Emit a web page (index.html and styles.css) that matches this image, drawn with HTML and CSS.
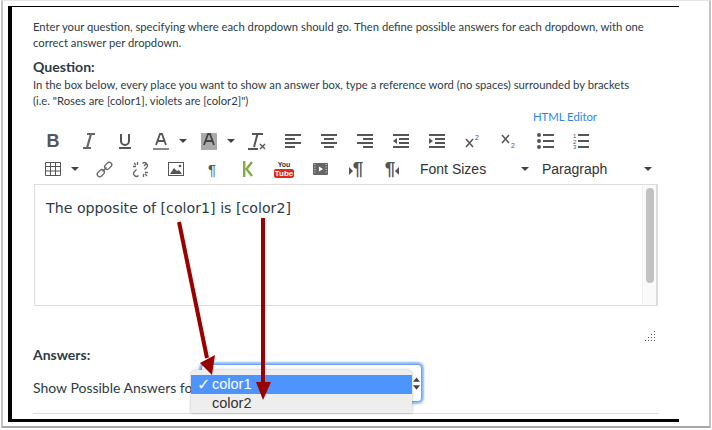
FILE: index.html
```html
<!DOCTYPE html>
<html lang="en">
<head>
<meta charset="utf-8">
<title>Question editor</title>
<link rel="stylesheet" href="styles.css">
</head>
<body>
<div class="window">
  <div class="frame">
    <div class="content">
      <p class="intro">Enter your question, specifying where each dropdown should go. Then define possible answers for each dropdown, with one<br>correct answer per dropdown.</p>
      <h2 class="heading-q">Question:</h2>
      <p class="help">In the box below, every place you want to show an answer box, type a reference word (no spaces) surrounded by brackets<br>(i.e. "Roses are [color1], violets are [color2]")</p>
      <div class="html-link"><a>HTML Editor</a></div>

      <div class="toolbar">
        <span class="btn"><span class="t-b">B</span></span>
        <span class="btn"><svg width="16" height="16" viewBox="0 0 16 16"><path d="M6 1h8M10 1L6 15M2 15h8" fill="none" stroke="#666" stroke-width="2.200"/></svg></span>
        <span class="btn"><svg width="14" height="16" viewBox="0 0 14 16"><path d="M3 1v7a4 4 0 0 0 8 0V1" fill="none" stroke="#555" stroke-width="2"/><rect x="1" y="14" width="12" height="2" fill="#555"/></svg></span>
        <span class="btn split"><span class="ic"><svg width="16" height="17" viewBox="0 0 16 17"><path d="M3 12L7 1h2l4 11M4.500 8h7" fill="none" stroke="#555" stroke-width="1.800"/><rect y="15" width="16" height="2" fill="#888"/></svg></span><span class="caret"></span></span>
        <span class="btn split"><span class="ic"><svg width="16" height="17" viewBox="0 0 16 17"><rect width="16" height="17" fill="#aaa"/><path d="M3 12L7 1h2l4 11M4.500 8h7" fill="none" stroke="#444" stroke-width="1.800"/></svg></span><span class="caret"></span></span>
        <span class="btn"><svg width="18" height="17" viewBox="0 0 18 17"><path d="M4 1h11M9.500 1L6 14" fill="none" stroke="#555" stroke-width="2"/><rect y="15" width="10" height="2" fill="#555"/><path d="M12 11l5 5M17 11l-5 5" stroke="#555" stroke-width="1.300"/></svg></span>
        <span class="btn"><svg width="16" height="14" viewBox="0 0 16 14"><path d="M0 1h16M0 5h10M0 9h16M0 13h10" stroke="#555" stroke-width="2"/></svg></span>
        <span class="btn"><svg width="16" height="14" viewBox="0 0 16 14"><path d="M0 1h16M3 5h10M0 9h16M3 13h10" stroke="#555" stroke-width="2"/></svg></span>
        <span class="btn"><svg width="16" height="14" viewBox="0 0 16 14"><path d="M0 1h16M6 5h10M0 9h16M6 13h10" stroke="#555" stroke-width="2"/></svg></span>
        <span class="btn"><svg width="16" height="14" viewBox="0 0 16 14"><path d="M0 1h16M6 5h10M6 9h10M0 13h16" stroke="#555" stroke-width="2"/><path d="M4 4v6L0 7z" fill="#555"/></svg></span>
        <span class="btn"><svg width="16" height="14" viewBox="0 0 16 14"><path d="M0 1h16M6 5h10M6 9h10M0 13h16" stroke="#555" stroke-width="2"/><path d="M0 4v6l4-3z" fill="#555"/></svg></span>
        <span class="btn"><svg width="16" height="14" viewBox="0 0 16 14"><path d="M1 5l7 8M8 5l-7 8" stroke="#555" stroke-width="1.500"/><text x="10" y="6" class="sup">2</text></svg></span>
        <span class="btn"><svg width="16" height="14" viewBox="0 0 16 14"><path d="M1 1l7 8M8 1l-7 8" stroke="#555" stroke-width="1.500"/><text x="10" y="14" class="sup">2</text></svg></span>
        <span class="btn"><svg width="17" height="16" viewBox="0 0 17 16"><circle cx="2" cy="2" r="2" fill="#555"/><circle cx="2" cy="8" r="2" fill="#555"/><circle cx="2" cy="14" r="2" fill="#555"/><path d="M6 2h11M6 8h11M6 14h11" stroke="#555" stroke-width="2"/></svg></span>
        <span class="btn"><svg width="16" height="16" viewBox="0 0 16 16"><text x="0" y="5" class="num">1</text><text x="0" y="10.500" class="num">2</text><text x="0" y="16" class="num">3</text><path d="M5 2h11M5 8h11M5 14h11" stroke="#555" stroke-width="2"/></svg></span>
      </div>

      <div class="toolbar row2">
        <span class="btn split"><span class="ic"><svg width="16" height="14" viewBox="0 0 16 14"><path d="M.5.5h15v13H.5zM.5 4.500h15M.5 9h15M5.500 .5v13M10.500 .5v13" fill="none" stroke="#555"/></svg></span><span class="caret"></span></span>
        <span class="btn gap"><svg width="17" height="17" viewBox="0 0 17 17"><g fill="none" stroke="#666" stroke-width="1.300"><rect x="-4" y="-2.500" width="8" height="5" rx="2.500" transform="translate(4.800 12.200) rotate(-45)"/><rect x="-4" y="-2.500" width="8" height="5" rx="2.500" transform="translate(12.200 4.800) rotate(-45)"/><path d="M6.500 10.500l4-4"/></g></svg></span>
        <span class="btn"><svg width="17" height="17" viewBox="0 0 17 17"><g fill="none" stroke="#666" stroke-width="1.300"><path d="M6.500 14.500a2.800 2.800 0 0 1-4-4L4.500 8.500M10.500 2.500a2.800 2.800 0 0 1 4 4L12.500 8.500M1 5.500h3M5.500 1v3M16 11.500h-3M11.500 16v-3M2 2l2 2M15 15l-2-2M12 5l2-2"/></g></svg></span>
        <span class="btn"><svg width="16" height="14" viewBox="0 0 16 14"><rect x=".5" y=".5" width="15" height="13" fill="#fff" stroke="#555"/><path d="M2 12l4-6 3 3 2-1 3 4z" fill="#555"/><circle cx="12" cy="4" r="1.300" fill="#555"/></svg></span>
        <span class="btn"><span class="t-para small">¶</span></span>
        <span class="btn"><svg width="10" height="16" viewBox="0 0 10 16"><path d="M1.200 0v16" stroke="#83ab43" stroke-width="2.400"/><path d="M9 1L3.500 8 9 15" fill="none" stroke="#83ab43" stroke-width="2.400"/></svg></span>
        <span class="btn"><span class="yt"><span class="yt-you">You</span><span class="yt-tube">Tube</span></span></span>
        <span class="btn"><svg width="15" height="12" viewBox="0 0 15 12"><rect width="15" height="12" rx="1" fill="#666"/><path d="M6 3.500v5l4-2.500z" fill="#fff"/><path d="M1 1.500h1.500M1 4h1.500M1 6.500h1.500M1 9h1.500M12.500 1.500H14M12.500 4H14M12.500 6.500H14M12.500 9H14" stroke="#bbb"/></svg></span>
        <span class="btn"><span class="t-para"><svg class="tri" width="4" height="8" viewBox="0 0 4 8"><path d="M0 0l4 4-4 4z" fill="#555"/></svg>¶</span></span>
        <span class="btn"><span class="t-para">¶<svg class="tri" width="4" height="8" viewBox="0 0 4 8"><path d="M4 0L0 4l4 4z" fill="#555"/></svg></span></span>
        <span class="sel sel-font">Font Sizes<span class="caret"></span></span>
        <span class="sel sel-para">Paragraph<span class="caret"></span></span>
      </div>

      <div class="editor">
        <div class="editor-text">The opposite of [color1] is [color2]</div>
        <div class="scrollbar"><span class="thumb"></span></div>
      </div>

      <div class="resize"><svg width="10" height="10" viewBox="0 0 10 10"><path d="M9 0h1v1H9zM9 3h1v1H9zM6 3h1v1H6zM9 6h1v1H9zM6 6h1v1H6zM3 6h1v1H3zM9 9h1v1H9zM6 9h1v1H6zM3 9h1v1H3zM0 9h1v1H0z" fill="#555"/></svg></div>

      <h3 class="heading-a">Answers:</h3>
      <div class="answer-row">
        <span class="answer-label">Show Possible Answers for</span>
        <div class="select-box">
          <svg class="updown" width="7" height="13" viewBox="0 0 8 14"><path d="M4 0l4 5H0zM4 14L0 9h8z" fill="#444"/></svg>
        </div>
        <div class="menu">
          <div class="opt opt-sel"><span class="check">✓</span>color1</div>
          <div class="opt">color2</div>
        </div>
      </div>
      <div class="rule"></div>
    </div>
  </div>

  <svg class="arrows" width="712" height="430" viewBox="0 0 712 430">
    <path d="M179 222L207 358" stroke="#990000" stroke-width="4" fill="none"/>
    <path d="M200 363L215 355L212 375z" fill="#990000"/>
    <path d="M263 218V384" stroke="#990000" stroke-width="4" fill="none"/>
    <path d="M256 382H271L263 400z" fill="#990000"/>
  </svg>
</div>
</body>
</html>
```
FILE: styles.css
```css
* { box-sizing: border-box; }
html, body { margin: 0; padding: 0; background: #fff; }
body { width: 712px; height: 430px; overflow: hidden; font-family: "Lato", sans-serif; color: #2d3b45; }

.window {
  position: relative;
  width: 710px;
  height: 428px;
  margin-left: 1px;
  padding: 6px 0 0 5px;
  background: #fff;
  border-top: 1px solid #e6e6e6;
  border-left: 2px solid #c4c4c4;
  border-right: 2px solid #c4c4c4;
  border-bottom: 2px solid #a8a8a8;
}
.frame {
  width: 671px;
  height: 416px;
  margin-top: -1px;
  border-top: 1px solid #000;
  border-left: 4px solid #000;
  border-bottom: 3px solid #000;
}
.content { padding: 12px 0 0 21px; width: 647px; }

.intro { margin: 0; font-size: 11.25px; line-height: 16px; width: 626px; white-space: nowrap; }
.heading-q { margin: 7px 0 0; font-size: 14.1px; line-height: 18px; font-weight: 700; }
.help { margin: 1px 0 0; font-size: 11.25px; line-height: 16px; white-space: nowrap; }
.html-link { margin-top: 0; height: 16px; font-size: 11.3px; line-height: 16px; text-align: right; padding-right: 62px; }
.html-link a { color: #2d87e0; }

.toolbar { display: flex; align-items: center; height: 28px; margin-top: 2px; margin-left: 2px; }
.row2 { margin-top: 0; }
.btn { display: flex; align-items: center; justify-content: center; width: 36px; height: 28px; flex: none; }
.btn.split { width: 48px; justify-content: flex-start; }
.btn.gap { margin-left: 3px; }
.ic { width: 36px; display: flex; justify-content: center; }
.caret { display: block; width: 0; height: 0; border-left: 4px solid transparent; border-right: 4px solid transparent; border-top: 4px solid #444; }
.t-b { font: 700 18px "Liberation Sans", sans-serif; color: #555; }
.t-para { display: flex; align-items: center; font: 700 19px "Liberation Sans", sans-serif; color: #555; }
.t-para.small { font-size: 15px; font-weight: 400; }
.tri { display: block; margin-top: 3px; }
.sup { font: 7px "Liberation Sans", sans-serif; fill: #555; }
.num { font: 6px "Liberation Sans", sans-serif; fill: #555; }

.yt { display: flex; flex-direction: column; align-items: center; width: 16px; font-family: "Liberation Sans", sans-serif; font-weight: 700; }
.yt-you { font-size: 7px; line-height: 8px; color: #333; }
.yt-tube { font-size: 8px; line-height: 9px; color: #fff; background: #e02a20; border-radius: 2px; padding: 0 1px; }

.sel { display: flex; justify-content: space-between; align-items: center; flex: none; font: 14px/28px "Liberation Sans", sans-serif; color: #333; }
.sel-font { width: 109px; margin-left: 10px; }
.sel-para { width: 110px; margin-left: 13px; }

.editor { display: flex; width: 624px; height: 122px; margin: 1px 0 0 1px; border: 1px solid #ddd; border-width: 1px 2px 1px 1px; }
.editor-text { flex: 1; padding: 14px 0 0 11px; font: 14.2px/18px "DejaVu Sans", sans-serif; color: #2d3b45; }
.scrollbar { width: 14px; padding: 3px 3px; background: #fafafa; border-left: 1px solid #eee; }
.thumb { display: block; width: 8px; height: 95px; border-radius: 4px; background: #c1c1c1; }

.resize { display: flex; justify-content: flex-end; height: 10px; margin-top: 25px; padding-right: 4px; width: 626px; }

.heading-a { margin: 6px 0 0; font-size: 14px; line-height: 16px; font-weight: 700; }
.answer-row { position: relative; height: 40px; margin-top: 0; padding-top: 17px; font-size: 14px; line-height: 16px; }
.answer-label { white-space: nowrap; }
.select-box { position: absolute; left: 168px; top: 1px; width: 221px; height: 38px; border: 1px solid #6ea3f0; border-radius: 4px; box-shadow: 0 0 2px 2px #8fbaf6; background: #fff; }
.updown { position: absolute; right: 1px; top: 12px; }
.menu { position: absolute; left: 158px; top: 7px; width: 221px; height: 43px; padding-top: 5px; background: #eee; border-radius: 5px 5px 0 0; box-shadow: 0 0 3px rgba(0,0,0,.3); overflow: hidden; }
.opt { position: relative; height: 19px; padding-left: 21px; font: 14.5px/19px "Liberation Sans", sans-serif; color: #333; }
.opt-sel { background: #4d94ff; color: #fff; }
.check { position: absolute; left: 6px; top: 0; font: 700 16px/19px "DejaVu Sans", sans-serif; }
.rule { width: 626px; height: 1px; margin-top: 10px; background: #ddd; }

.arrows { position: absolute; left: -3px; top: -1px; pointer-events: none; }
```
